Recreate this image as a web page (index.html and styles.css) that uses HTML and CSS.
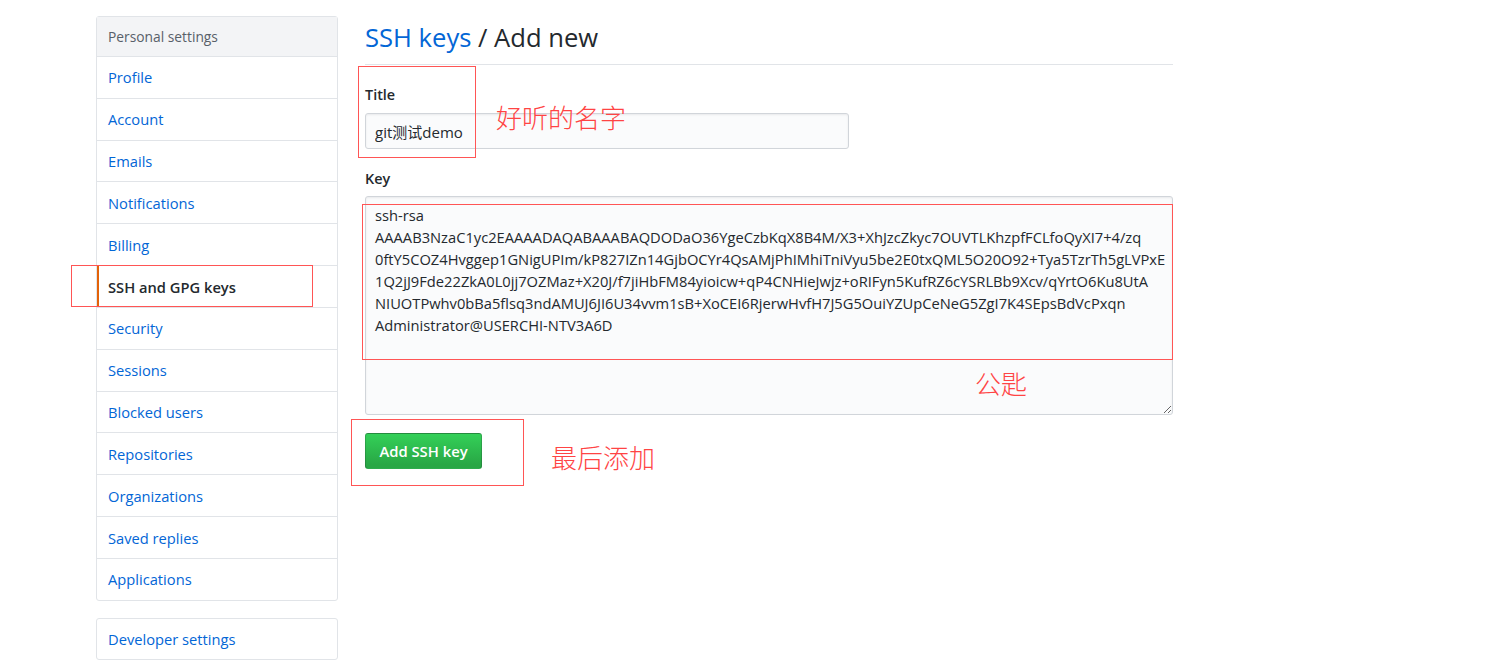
FILE: index.html
```html
<!DOCTYPE html>
<html lang="zh-CN">
<head>
<meta charset="utf-8">
<title>SSH keys / Add new</title>
<link rel="stylesheet" href="styles.css">
</head>
<body>
<div class="page">
  <div class="layout">
    <nav class="sidebar">
      <div class="menu">
        <div class="menu-heading">Personal settings</div>
        <a class="menu-item" href="#">Profile</a>
        <a class="menu-item" href="#">Account</a>
        <a class="menu-item" href="#">Emails</a>
        <a class="menu-item" href="#">Notifications</a>
        <a class="menu-item" href="#">Billing</a>
        <a class="menu-item selected" href="#">SSH and GPG keys</a>
        <a class="menu-item" href="#">Security</a>
        <a class="menu-item" href="#">Sessions</a>
        <a class="menu-item" href="#">Blocked users</a>
        <a class="menu-item" href="#">Repositories</a>
        <a class="menu-item" href="#">Organizations</a>
        <a class="menu-item" href="#">Saved replies</a>
        <a class="menu-item" href="#">Applications</a>
      </div>
      <div class="menu menu-dev">
        <a class="menu-item first" href="#">Developer settings</a>
      </div>
    </nav>
    <main class="main">
      <h1 class="subhead"><a href="#" class="crumb">SSH keys</a> / Add new</h1>
      <form class="form">
        <label class="label" for="title">Title</label>
        <input id="title" class="input" type="text" value="git测试demo">
        <label class="label label-key" for="key">Key</label>
        <textarea id="key" class="textarea">ssh-rsa
AAAAB3NzaC1yc2EAAAADAQABAAABAQDODaO36YgeCzbKqX8B4M/X3+XhJzcZkyc7OUVTLKhzpfFCLfoQyXI7+4/zq
0ftY5COZ4Hvggep1GNigUPIm/kP827IZn14GjbOCYr4QsAMjPhIMhiTniVyu5be2E0txQML5O20O92+Tya5TzrTh5gLVPxE
1Q2jJ9Fde22ZkA0L0jj7OZMaz+X20J/f7jiHbFM84yioicw+qP4CNHieJwjz+oRIFyn5KufRZ6cYSRLBb9Xcv/qYrtO6Ku8UtA
NIUOTPwhv0bBa5flsq3ndAMUJ6JI6U34vvm1sB+XoCEI6RjerwHvfH7J5G5OuiYZUpCeNeG5ZgI7K4SEpsBdVcPxqn
Administrator@USERCHI-NTV3A6D</textarea>
        <button type="button" class="btn">Add SSH key</button>
      </form>
    </main>
  </div>

  <div class="mark mark-nav"></div>
  <div class="mark mark-title"></div>
  <div class="mark mark-key"></div>
  <div class="mark mark-btn"></div>
  <div class="note note-title">好听的名字</div>
  <div class="note note-key">公匙</div>
  <div class="note note-btn">最后添加</div>
</div>
</body>
</html>
```

FILE: styles.css
```css
* { box-sizing: border-box; }

html, body {
  margin: 0;
  background: #fff;
}

body {
  font-family: "Segoe UI", "Open Sans", "Noto Sans CJK SC", sans-serif;
  font-size: 14.7px;
  color: #24292e;
}

.page {
  position: relative;
  width: 1491px;
  height: 668px;
  overflow: hidden;
}

.layout {
  display: flex;
  gap: 27px;
  padding: 16px 0 0 96px;
}

.sidebar {
  width: 242px;
  flex: none;
}

.menu {
  border: 1px solid #e1e4e8;
  border-radius: 3px;
  background: #fff;
}

.menu-heading {
  height: 40px;
  display: flex;
  align-items: center;
  padding: 0 11px;
  background: #f3f4f6;
  color: #586069;
  font-size: 13.8px;
  border-bottom: 1px solid #e1e4e8;
}

.menu-item {
  display: flex;
  align-items: center;
  height: 41.83px;
  padding: 0 11px;
  color: #0366d6;
  text-decoration: none;
  border-top: 1px solid #e1e4e8;
}

.menu-heading + .menu-item { border-top: 0; height: 40.83px; }

.menu-item.first { border-top: 0; height: 40px; }

.menu-item.selected {
  color: #24292e;
  font-weight: 600;
  box-shadow: inset 2px 0 0 #e36209;
}

.menu-dev {
  margin-top: 17px;
}

.main {
  width: 808px;
  flex: none;
}

.subhead {
  margin: 0;
  padding: 4px 0 8px;
  font-size: 25.6px;
  font-weight: 400;
  line-height: 36px;
  color: #24292e;
  border-bottom: 1px solid #e1e4e8;
}

.crumb {
  color: #0366d6;
  text-decoration: none;
}

.form {
  display: flex;
  flex-direction: column;
  align-items: flex-start;
}

.label {
  display: block;
  margin-top: 20px;
  font-size: 14.4px;
  font-weight: 600;
  line-height: 20px;
}

.input {
  margin-top: 8px;
  width: 484px;
  height: 36px;
  padding: 0 9px;
  font: inherit;
  font-size: 15px;
  color: #24292e;
  background: #fafbfc;
  border: 1px solid #d1d5da;
  border-radius: 3px;
  box-shadow: inset 0 1px 2px rgba(27, 31, 35, 0.075);
  outline: none;
}

.textarea {
  margin-top: 7px;
  width: 808px;
  height: 219px;
  padding: 7px 9px;
  font: inherit;
  font-size: 14.7px;
  line-height: 22px;
  color: #24292e;
  background: #fafbfc;
  border: 1px solid #d1d5da;
  border-radius: 3px;
  box-shadow: inset 0 1px 2px rgba(27, 31, 35, 0.075);
  white-space: pre;
  overflow: hidden;
  resize: vertical;
  outline: none;
}

.btn {
  margin-top: 18px;
  width: 117px;
  height: 36px;
  padding: 0;
  font: inherit;
  font-size: 14.8px;
  font-weight: 600;
  color: #fff;
  background-image: linear-gradient(-180deg, #34d058 0%, #28a745 90%);
  border: 1px solid rgba(27, 31, 35, 0.2);
  border-radius: 3px;
  cursor: pointer;
}

/* annotations laid over the screenshot */
.mark {
  position: absolute;
  border: 1px solid #f55;
}

.mark-nav { left: 71px; top: 265px; width: 242px; height: 42px; }
.mark-title { left: 358px; top: 66px; width: 118px; height: 92px; }
.mark-key { left: 362px; top: 204px; width: 811px; height: 156px; }
.mark-btn { left: 351px; top: 419px; width: 173px; height: 67px; }

.note {
  position: absolute;
  font-family: "Noto Sans CJK SC", sans-serif;
  font-weight: 300;
  font-size: 26px;
  line-height: 30px;
  color: #f44;
  white-space: nowrap;
}

.note-title { left: 496px; top: 102px; }
.note-key { left: 975px; top: 368px; }
.note-btn { left: 551px; top: 442px; }
```
